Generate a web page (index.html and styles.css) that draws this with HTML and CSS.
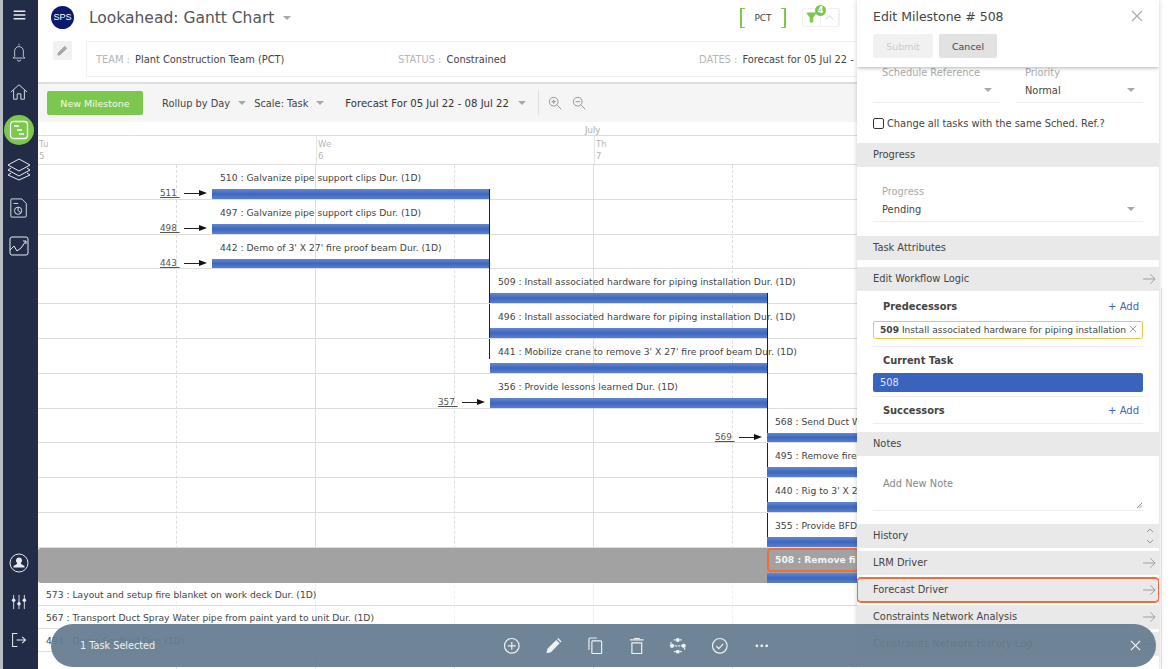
FILE: index.html
```html
<!DOCTYPE html>
<html lang="en">
  <head>
    <meta charset="UTF-8" />
    <title>Lookahead: Gantt Chart</title>
    <link rel="stylesheet" href="styles.css">
  </head>
  <body>
    <!-- Sidebar -->
    <nav class="sidebar">
      <svg class="nav-icon menu" viewBox="0 0 16 12"><path d="M1 1.500h14M1 6h14M1 10.500h14"/></svg>
      <svg class="nav-icon bell" viewBox="0 0 20 24"><path d="M10 1v2M4.500 17V10a5.500 5.500 0 0 1 11 0v7l2 2H2.500zM8 21a2 2 0 0 0 4 0"/></svg>
      <svg class="nav-icon home" viewBox="0 0 20 20"><path d="M1 10 10 2l9 8M4 8v10h4v-6h4v6h4V8"/></svg>
      <div class="nav-active">
        <svg viewBox="0 0 20 20"><rect x="1.500" y="1.500" width="17" height="17" rx="3"/><path d="M5 6h5M8 10h5M10 14h5"/></svg>
      </div>
      <svg class="nav-icon layers" viewBox="0 0 24 24"><path d="M12 2 23 8l-11 6L1 8zM4 11l-3 2 11 6 11-6-3-2M4 16l-3 2 11 5 11-5-3-2"/></svg>
      <svg class="nav-icon report" viewBox="0 0 20 22"><path d="M2 1h11l5 5v14a1 1 0 0 1-1 1H2a1 1 0 0 1-1-1V2a1 1 0 0 1 1-1zM4 6h5"/><circle cx="9" cy="14" r="4"/><path d="M9 10v4l3 2"/></svg>
      <svg class="nav-icon trend" viewBox="0 0 20 20"><rect x="1" y="1" width="18" height="18" rx="2"/><path d="M1 14l4-4 3 5 4-3 5-7M14 5h3v3"/></svg>
      <div class="nav-spacer"></div>
      <svg class="nav-icon user" viewBox="0 0 20 20"><circle cx="10" cy="10" r="9"/><path class="solid" d="M10 4.500a3 3 0 0 1 2 5.300v1.200l3.500 2v1.500h-11V13l3.500-2V9.800a3 3 0 0 1 2-5.300z"/></svg>
      <svg class="nav-icon sliders" viewBox="0 0 18 18"><path d="M3 1v16M9 1v16M15 1v16"/><circle class="solid" cx="3" cy="7" r="2"/><circle class="solid" cx="9" cy="11" r="2"/><circle class="solid" cx="15" cy="7" r="2"/></svg>
      <svg class="nav-icon logout" viewBox="0 0 20 20"><path d="M8 2H2v16h6M7 10h12M14 6l4 4-4 4"/></svg>
    </nav>

    <main class="main">
      <!-- Page header -->
      <header class="page-header">
        <div class="title-row">
          <div class="logo">SPS</div>
          <h1>Lookahead: Gantt Chart</h1>
          <span class="caret title-caret"></span>
          <div class="team-tag">PCT</div>
          <div class="filter-box">
            <div class="filter-cell">
              <svg viewBox="0 0 12 12"><path d="M1 1h10L7.500 6v5h-3V6z"/></svg>
              <span class="filter-badge">4</span>
            </div>
            <div class="filter-cell">
              <svg class="chevron" viewBox="0 0 12 12"><path d="M2 8l4-4 4 4"/></svg>
            </div>
          </div>
        </div>
        <div class="info-row">
          <button class="edit-btn">
            <svg viewBox="0 0 12 12"><path d="M1 11l.6-2.600L8.500 1.500l2 2-6.900 6.900z"/></svg>
          </button>
          <div class="info-box">
            <div class="info-team"><span>TEAM :</span> Plant Construction Team (PCT)</div>
            <div class="info-status"><span>STATUS :</span> Constrained</div>
            <div class="info-dates"><span>DATES :</span> Forecast for 05 Jul 22 -</div>
          </div>
        </div>
      </header>

      <!-- Toolbar -->
      <div class="toolbar">
        <button class="btn-new">New Milestone</button>
        <div class="tool rollup">Rollup by Day<span class="caret"></span></div>
        <div class="tool scale">Scale: Task<span class="caret"></span></div>
        <div class="tool forecast">Forecast For 05 Jul 22 - 08 Jul 22<span class="caret"></span></div>
        <div class="zoom-tools">
          <svg viewBox="0 0 16 16"><circle cx="6.500" cy="6.500" r="5"/><path d="M10.500 10.500 15 15M4 6.500h5M6.500 4v5"/></svg>
          <svg viewBox="0 0 16 16"><circle cx="6.500" cy="6.500" r="5"/><path d="M10.500 10.500 15 15M4 6.500h5"/></svg>
        </div>
      </div>

      <!-- Gantt -->
      <section class="gantt">
        <div class="grid-lines">
          <i></i><i></i><i></i><i></i><i></i><i></i>
        </div>
        <div class="month-row"><span>July</span></div>
        <div class="day-row">
          <div class="day">Tu<br>5</div>
          <div class="day">We<br>6</div>
          <div class="day">Th<br>7</div>
        </div>

        <div class="row col-a">
          <div class="task">510 : Galvanize pipe support clips Dur. (1D)</div>
          <div class="bar bar-end"><a class="link">511&nbsp;</a></div>
        </div>
        <div class="row col-a">
          <div class="task">497 : Galvanize pipe support clips Dur. (1D)</div>
          <div class="bar bar-end"><a class="link">498&nbsp;</a></div>
        </div>
        <div class="row col-a">
          <div class="task">442 : Demo of 3' X 27' fire proof beam Dur. (1D)</div>
          <div class="bar bar-end"><a class="link">443&nbsp;</a></div>
        </div>
        <div class="row col-b dep">
          <div class="task">509 : Install associated hardware for piping installation Dur. (1D)</div>
          <div class="bar bar-end"></div>
        </div>
        <div class="row col-b dep">
          <div class="task">496 : Install associated hardware for piping installation Dur. (1D)</div>
          <div class="bar bar-end"></div>
        </div>
        <div class="row col-b dep dep-short">
          <div class="task">441 : Mobilize crane to remove 3' X 27' fire proof beam Dur. (1D)</div>
          <div class="bar bar-end"></div>
        </div>
        <div class="row col-b">
          <div class="task">356 : Provide lessons learned Dur. (1D)</div>
          <div class="bar bar-end"><a class="link">357&nbsp;</a></div>
        </div>
        <div class="row col-c dep">
          <div class="task">568 : Send Duct W</div>
          <div class="bar"><a class="link">569&nbsp;</a></div>
        </div>
        <div class="row col-c dep">
          <div class="task">495 : Remove fire</div>
          <div class="bar"></div>
        </div>
        <div class="row col-c dep">
          <div class="task">440 : Rig to 3' X 2</div>
          <div class="bar"></div>
        </div>
        <div class="row col-c dep">
          <div class="task">355 : Provide BFD</div>
          <div class="bar"></div>
        </div>
        <div class="row col-c selected">
          <div class="task task-selected">508 : Remove fi</div>
          <div class="bar"></div>
        </div>

        <div class="row-plain">573 : Layout and setup fire blanket on work deck Dur. (1D)</div>
        <div class="row-plain">567 : Transport Duct Spray Water pipe from paint yard to unit Dur. (1D)</div>
        <div class="row-plain">494 : Demo Scaffold Dur. (1D)</div>
      </section>
    </main>

    <!-- Edit panel -->
    <aside class="panel">
      <div class="panel-head">
        <div class="panel-title">
          <h2>Edit Milestone # 508</h2>
          <svg class="close" viewBox="0 0 12 12"><path d="M1 1l10 10M11 1 1 11"/></svg>
        </div>
        <div class="panel-actions">
          <button class="btn-submit">Submit</button>
          <button class="btn-cancel">Cancel</button>
        </div>
      </div>

      <div class="panel-body">
        <div class="field-pair">
          <div class="field">
            <label>Schedule Reference</label>
            <div class="select"><span></span><i class="caret"></i></div>
          </div>
          <div class="field">
            <label>Priority</label>
            <div class="select"><span>Normal</span><i class="caret"></i></div>
          </div>
        </div>
        <div class="check-row"><span class="checkbox"></span>Change all tasks with the same Sched. Ref.?</div>

        <div class="section">Progress</div>
        <div class="field progress-field">
          <label>Progress</label>
          <div class="select"><span>Pending</span><i class="caret"></i></div>
        </div>

        <div class="section">Task Attributes</div>
        <div class="section sec-logic">Edit Workflow Logic
          <svg class="arrow" viewBox="0 0 14 12"><path d="M0 6h13M8 1l5 5-5 5"/></svg>
        </div>

        <div class="logic">
          <div class="logic-head"><b>Predecessors</b><a>+ Add</a></div>
          <div class="chip"><b>509</b> Install associated hardware for piping installation
            <svg viewBox="0 0 10 10"><path d="M1 1l8 8M9 1 1 9"/></svg>
          </div>
          <div class="logic-head rule"><b>Current Task</b></div>
          <div class="current">508</div>
          <div class="logic-head rule"><b>Successors</b><a>+ Add</a></div>
          <div class="logic-end"></div>
        </div>

        <div class="section">Notes</div>
        <div class="note">Add New Note
          <svg viewBox="0 0 6 6"><path d="M0 6l6-6M3 6l3-3"/></svg>
        </div>

        <div class="section sec-history">History
          <svg class="updown" viewBox="0 0 8 18"><path d="M1 5l3-3 3 3M1 13l3 3 3-3"/></svg>
        </div>
        <div class="section sec-driver">LRM Driver
          <svg class="arrow" viewBox="0 0 14 12"><path d="M0 6h13M8 1l5 5-5 5"/></svg>
        </div>
        <div class="section sec-driver sec-marked">Forecast Driver
          <svg class="arrow" viewBox="0 0 14 12"><path d="M0 6h13M8 1l5 5-5 5"/></svg>
        </div>
        <div class="section sec-driver">Constraints Network Analysis
          <svg class="arrow" viewBox="0 0 14 12"><path d="M0 6h13M8 1l5 5-5 5"/></svg>
        </div>
        <div class="section sec-driver">Constraints Network History Log
          <svg class="arrow" viewBox="0 0 14 12"><path d="M0 6h13M8 1l5 5-5 5"/></svg>
        </div>
      </div>
    </aside>
    <div class="right-gutter"></div>

    <!-- Selection bar -->
    <div class="select-bar">
      <div class="select-count">1 Task Selected</div>
      <div class="select-tools">
        <svg viewBox="0 0 18 18"><circle cx="9" cy="9" r="7.500"/><path d="M9 5v8M5 9h8"/></svg>
        <svg viewBox="0 0 18 18"><path class="solid" d="M1.500 16.500l1-4.500L11.500 3l3.500 3.500-9 9zM12.500 2l1-1 3.500 3.500-1 1z"/></svg>
        <svg viewBox="0 0 18 18"><path d="M3 13V2.500A1.500 1.500 0 0 1 4.500 1H11"/><rect x="6" y="4" width="10" height="13" rx="1"/></svg>
        <svg viewBox="0 0 18 18"><path d="M2 3h14M6 1.500h6M4 6h10v11H4z"/></svg>
        <svg viewBox="0 0 18 18"><path d="M3.500 9h11M5 3h8M5 15h8M2 5v2M16 11v2" stroke-dasharray="2 1"/><circle class="solid" cx="9" cy="3" r="2"/><circle class="solid" cx="3" cy="9" r="2.200"/><circle class="solid" cx="15" cy="9" r="2.200"/><circle class="solid" cx="9" cy="15" r="2"/></svg>
        <svg viewBox="0 0 18 18"><circle cx="9" cy="9" r="7.500"/><path d="M5.500 9.500l2.500 2.500 4.500-5"/></svg>
        <svg viewBox="0 0 18 18"><circle class="solid" cx="4" cy="9" r="1.400"/><circle class="solid" cx="9" cy="9" r="1.400"/><circle class="solid" cx="14" cy="9" r="1.400"/></svg>
      </div>
      <svg class="select-close" viewBox="0 0 12 12"><path d="M1 1l10 10M11 1 1 11"/></svg>
    </div>
  </body>
</html>
```

FILE: styles.css
```css
* {
  box-sizing: border-box;
}
body {
  margin: 0;
  width: 1170px;
  height: 669px;
  overflow: hidden;
  display: flex;
  font-family: "DejaVu Sans", sans-serif;
  font-size: 9.850px;
  color: #444;
  background: #fff;
  position: relative;
}
svg {
  display: block;
  fill: none;
  stroke: currentColor;
}
svg .solid {
  fill: currentColor;
  stroke: none;
}
button {
  font-family: inherit;
  border: none;
}
.caret {
  display: inline-block;
  width: 0;
  height: 0;
  border-left: 4px solid transparent;
  border-right: 4px solid transparent;
  border-top: 4px solid #a8a8a8;
}

/* sidebar */
.sidebar {
  width: 38px;
  flex: none;
  background: #222c47;
  border-left: 3px solid #b9bcc2;
  color: #e8eaee;
  display: flex;
  flex-direction: column;
  align-items: center;
  padding-top: 10px;
}
.nav-icon {
  width: 20px;
  height: 20px;
  stroke-width: 1;
  margin-left: -3px;
}
.menu {
  width: 15px;
  height: 10px;
  stroke-width: 1.600;
  margin-bottom: 23px;
}
.bell {
  height: 19px;
  margin-bottom: 21px;
}
.home {
  height: 18px;
  margin-bottom: 14px;
}
.nav-active {
  width: 30px;
  height: 30px;
  border-radius: 50%;
  background: #7cc84e;
  margin-left: -3px;
  margin-bottom: 12px;
  padding: 5px;
}
.nav-active svg {
  width: 20px;
  height: 20px;
  stroke-width: 1.300;
  color: #fff;
}
.layers {
  width: 24px;
  height: 24px;
  margin-bottom: 17px;
}
.report {
  height: 20px;
  margin-bottom: 18px;
}
.trend {
  margin-bottom: 0;
}
.nav-spacer {
  flex: 1;
}
.user {
  margin-bottom: 21px;
}
.sliders {
  height: 16px;
  margin-bottom: 22px;
}
.logout {
  height: 16px;
  stroke-width: 1.300;
  margin-bottom: 21px;
}

/* page header */
.main {
  width: 819px;
  flex: none;
  display: flex;
  flex-direction: column;
  overflow: hidden;
}
.page-header {
  height: 84px;
  flex: none;
  border-bottom: 2px solid #ddd;
}
.title-row {
  height: 35px;
  display: flex;
  align-items: center;
  position: relative;
}
.logo {
  width: 23px;
  height: 23px;
  margin: 0 0 0 13px;
  border-radius: 50%;
  background: #0c1a6e;
  color: #fff;
  font: 9px "Liberation Sans", sans-serif;
  line-height: 23px;
  text-align: center;
}
h1 {
  font-size: 15.500px;
  font-weight: 400;
  margin: 0 0 0 15px;
  color: #555;
  white-space: nowrap;
}
.title-caret {
  margin-left: 9px;
}
.team-tag {
  margin-left: auto;
  width: 46px;
  height: 20px;
  position: relative;
  text-align: center;
  line-height: 20px;
  font-size: 9px;
}
.team-tag::before,
.team-tag::after {
  content: "";
  position: absolute;
  top: 0;
  bottom: 0;
  width: 3px;
  border: 1px solid #7cc84e;
}
.team-tag::before {
  left: 0;
  border-left-width: 2px;
  border-right: none;
}
.team-tag::after {
  right: 0;
  border-right-width: 2px;
  border-left: none;
}
.filter-box {
  margin-left: 16px;
  margin-right: 17px;
  display: flex;
  height: 19px;
  border: 1px solid #f0f0f0;
  border-radius: 2px;
}
.filter-cell {
  width: 18px;
  position: relative;
  padding: 3px 3px;
  border-right: 1px solid #f0f0f0;
}
.filter-cell svg {
  width: 11px;
  height: 11px;
  color: #7cc84e;
  fill: #7cc84e;
}
.filter-cell .chevron {
  color: #ccc;
  fill: none;
}
.filter-badge {
  position: absolute;
  top: -4px;
  left: 12px;
  width: 11px;
  height: 11px;
  border-radius: 50%;
  background: #7cc84e;
  color: #fff;
  font-size: 8px;
  font-weight: 700;
  line-height: 11px;
  text-align: center;
}
.info-row {
  display: flex;
  align-items: flex-start;
  padding-top: 6px;
  padding-left: 15px;
}
.edit-btn {
  width: 19px;
  height: 19px;
  padding: 4px;
  background: #f1f1f1;
  border-radius: 2px;
  color: #999;
  flex: none;
}
.edit-btn svg {
  width: 11px;
  height: 11px;
  fill: #aaa;
}
.info-box {
  margin-left: 14px;
  flex: none;
  width: 800px;
  height: 36px;
  border: 1px solid #f1f1f1;
  display: flex;
  align-items: center;
  padding-left: 9px;
  color: #444;
}
.info-box span {
  color: #b5b5b5;
  margin-right: 2px;
}
.info-team {
  width: 302px;
  flex: none;
}
.info-status {
  width: 301px;
  flex: none;
}
.info-dates {
  white-space: nowrap;
}

/* toolbar */
.toolbar {
  height: 38px;
  flex: none;
  background: #f5f5f5;
  display: flex;
  align-items: center;
  padding-left: 9px;
  white-space: nowrap;
}
.btn-new {
  width: 96px;
  height: 24px;
  border-radius: 2px;
  background: #7cc84e;
  color: #f2fbe9;
  font-size: 9.500px;
}
.tool {
  display: flex;
  align-items: center;
  gap: 8px;
}
.rollup {
  margin-left: 19px;
}
.scale {
  margin-left: 8px;
}
.forecast {
  margin-left: 21px;
  color: #333;
  font-size: 10.100px;
  gap: 9px;
}
.zoom-tools {
  margin-left: 12px;
  padding-left: 9px;
  height: 24px;
  border-left: 1px solid #ddd;
  display: flex;
  align-items: center;
  gap: 10px;
  color: #888;
}
.zoom-tools svg {
  width: 14px;
  height: 14px;
}

/* gantt */
.gantt {
  flex: 1;
  position: relative;
  overflow: hidden;
}
.grid-lines {
  position: absolute;
  inset: 43px 0 0 0;
  display: flex;
}
.grid-lines i {
  width: 139px;
  flex: none;
  border-right: 1px dashed #ddd;
}
.grid-lines i:nth-child(even) {
  border-right: 1px solid #ddd;
}
.month-row {
  height: 14px;
  border-bottom: 1px solid #ddd;
  position: relative;
  padding-left: 547px;
  font-size: 8.500px;
  color: #aaa;
  line-height: 17px;
}
.day-row {
  height: 29px;
  border-bottom: 1px solid #ddd;
  display: flex;
  position: relative;
  font-size: 8.500px;
  line-height: 12px;
  color: #b5b5b5;
}
.day {
  width: 278px;
  flex: none;
  padding: 2px 0 0 1px;
  border-left: 1px solid #e4e4e4;
}
.day:first-child {
  border-left: none;
}
.row {
  height: 34.800px;
  position: relative;
  border-bottom: 1px solid #ddd;
  font-size: 9.200px;
  color: #444;
  white-space: nowrap;
}
.col-a {
  padding-left: 174px;
}
.col-b {
  padding-left: 452px;
}
.col-c {
  padding-left: 729px;
}
.task {
  height: 24px;
  line-height: 25px;
  padding-left: 8px;
}
.bar {
  height: 9.800px;
  width: 277px;
  position: relative;
  background: linear-gradient(#6488cf, #3d66bf 50%, #5a80cb);
}
.bar-end::after {
  content: "";
  position: absolute;
  left: 277px;
  top: 0;
  width: 1px;
  height: 36px;
  background: #222;
}
.dep::before {
  content: "";
  position: absolute;
  top: 0;
  bottom: 0;
  width: 1px;
  background: #222;
}
.dep-short::before {
  bottom: 14px;
}
.col-b.dep::before {
  left: 451px;
}
.col-c.dep::before {
  left: 729px;
}
.link {
  position: absolute;
  right: 100%;
  top: -1px;
  width: 52px;
  font-size: 8.800px;
  color: #555;
  text-decoration: underline;
  line-height: 11px;
}
.link::after {
  content: "";
  position: absolute;
  left: 24px;
  top: 5px;
  width: 16px;
  height: 1px;
  background: #222;
}
.link::before {
  content: "";
  position: absolute;
  left: 39px;
  top: 2px;
  border-left: 8px solid #111;
  border-top: 3.500px solid transparent;
  border-bottom: 3.500px solid transparent;
}
.selected {
  background: #a2a2a2;
  border-radius: 3px 0 0 3px;
  border-bottom: none;
  padding-left: 729px;
}
.task-selected {
  height: 24px;
  color: #f4f4f4;
  font-weight: 700;
  border: 2px solid #f26b3a;
  border-radius: 4px;
  padding-left: 6px;
  line-height: 20px;
  overflow: hidden;
  width: 92px;
  margin-bottom: 1px;
}
.row-plain {
  height: 23.200px;
  position: relative;
  padding-left: 8px;
  border-bottom: 1px solid #ddd;
  font-size: 9.200px;
  line-height: 23px;
  white-space: nowrap;
  background: rgba(255, 255, 255, 0.6);
}

/* panel */
.panel {
  width: 302px;
  flex: none;
  background: #fff;
  box-shadow: 0 0 5px rgba(0, 0, 0, 0.2);
  display: flex;
  flex-direction: column;
  overflow: hidden;
  position: relative;
}
.panel-head {
  height: 67px;
  flex: none;
  padding: 0 16px;
  background: #fff;
  box-shadow: 0 1px 4px rgba(0, 0, 0, 0.3);
  position: relative;
}
.panel-title {
  height: 32px;
  display: flex;
  align-items: center;
  justify-content: space-between;
}
h2 {
  font-size: 12.500px;
  font-weight: 400;
  margin: 0;
  color: #444;
}
.close {
  width: 12px;
  height: 12px;
  color: #aaa;
  margin-right: 0;
  stroke-width: 1.200;
}
.panel-actions {
  display: flex;
  gap: 6px;
  margin-top: 2px;
}
.panel-actions button {
  height: 24px;
  border-radius: 2px;
  font-size: 9.500px;
}
.btn-submit {
  width: 60px;
  background: #f1f1f1;
  color: #ccc;
}
.btn-cancel {
  width: 58px;
  background: #e2e2e2;
  color: #444;
}
.panel-body {
  flex: 1;
  overflow: hidden;
}
.field-pair {
  display: flex;
  gap: 16px;
  padding: 0 16px;
}
.field {
  flex: 1;
}
.field label {
  display: block;
  color: #aaa;
  line-height: 11px;
  padding-left: 9px;
}
.select {
  height: 25px;
  display: flex;
  align-items: center;
  justify-content: space-between;
  border-bottom: 1px solid #eee;
  padding: 0 8px 0 9px;
  color: #444;
}
.check-row {
  display: flex;
  align-items: center;
  gap: 3px;
  height: 40px;
  padding-left: 16px;
}
.checkbox {
  width: 11px;
  height: 11px;
  border: 1px solid #333;
  border-radius: 2px;
}
.section {
  height: 24px;
  background: #e9e9e9;
  padding-left: 16px;
  line-height: 24px;
  position: relative;
  color: #444;
}
.section .arrow,
.section .updown {
  position: absolute;
  right: 3px;
  top: 6px;
  width: 13px;
  height: 12px;
  color: #999;
}
.section .updown {
  right: 5px;
  top: 3px;
  width: 8px;
  height: 18px;
}
.progress-field {
  padding: 19px 16px 0;
  height: 69px;
}
.sec-logic {
  margin-top: 7px;
}
.logic {
  padding: 0 16px;
  height: 141px;
}
.logic-head {
  display: flex;
  justify-content: space-between;
  align-items: center;
  height: 30px;
  padding: 0 4px 0 10px;
}
.logic-head a {
  color: #3a63bd;
  font-size: 10px;
}
.chip {
  height: 18px;
  border: 1px solid #f3c549;
  border-radius: 2px;
  padding-left: 6px;
  line-height: 16px;
  font-size: 9.100px;
  white-space: nowrap;
  position: relative;
  overflow: hidden;
}
.chip svg {
  position: absolute;
  right: 5px;
  top: 3px;
  width: 8px;
  height: 8px;
  color: #888;
}
.rule {
  margin-top: 7px;
  border-top: 1px solid #eee;
  height: 27px;
}
.current {
  height: 19px;
  background: #3a63bd;
  border-radius: 2px;
  color: #dfe7f7;
  padding-left: 7px;
  line-height: 19px;
}
.current + .rule {
  margin-top: 4px;
}
.logic-end {
  border-top: 1px solid #eee;
}
.note {
  position: relative;
  margin: 0 16px;
  padding: 22px 10px 0;
  border-bottom: 1px solid #eee;
  color: #888;
  height: 55px;
}
.note svg {
  position: absolute;
  right: 1px;
  bottom: 2px;
  width: 5px;
  height: 5px;
  color: #777;
}
.sec-history {
  margin-top: 13px;
  margin-bottom: 1px;
}
.sec-driver {
  margin-top: 3px;
}
.sec-marked {
  border-radius: 4px;
  box-shadow: 0 0 0 1px #f26b3a, inset 0 0 0 1px #f26b3a;
}
.right-gutter {
  flex: 1;
  margin: 288px 0 0 2px;
  border-left: 1px solid #e8e8e8;
}

/* selection bar */
.select-bar {
  position: absolute;
  left: 51px;
  right: 14px;
  bottom: 2px;
  height: 43px;
  border-radius: 22px;
  background: rgba(102, 124, 144, 0.94);
  color: #eef2f5;
  display: flex;
  align-items: center;
  padding-left: 29px;
}
.select-count {
  width: 423px;
  font-size: 9.700px;
  flex: none;
}
.select-tools {
  display: flex;
  gap: 24px;
}
.select-tools svg {
  width: 17.600px;
  height: 17.600px;
  stroke-width: 1.200;
}
.select-close {
  width: 11px;
  height: 11px;
  margin-left: 360px;
  stroke-width: 1.400;
}
```
